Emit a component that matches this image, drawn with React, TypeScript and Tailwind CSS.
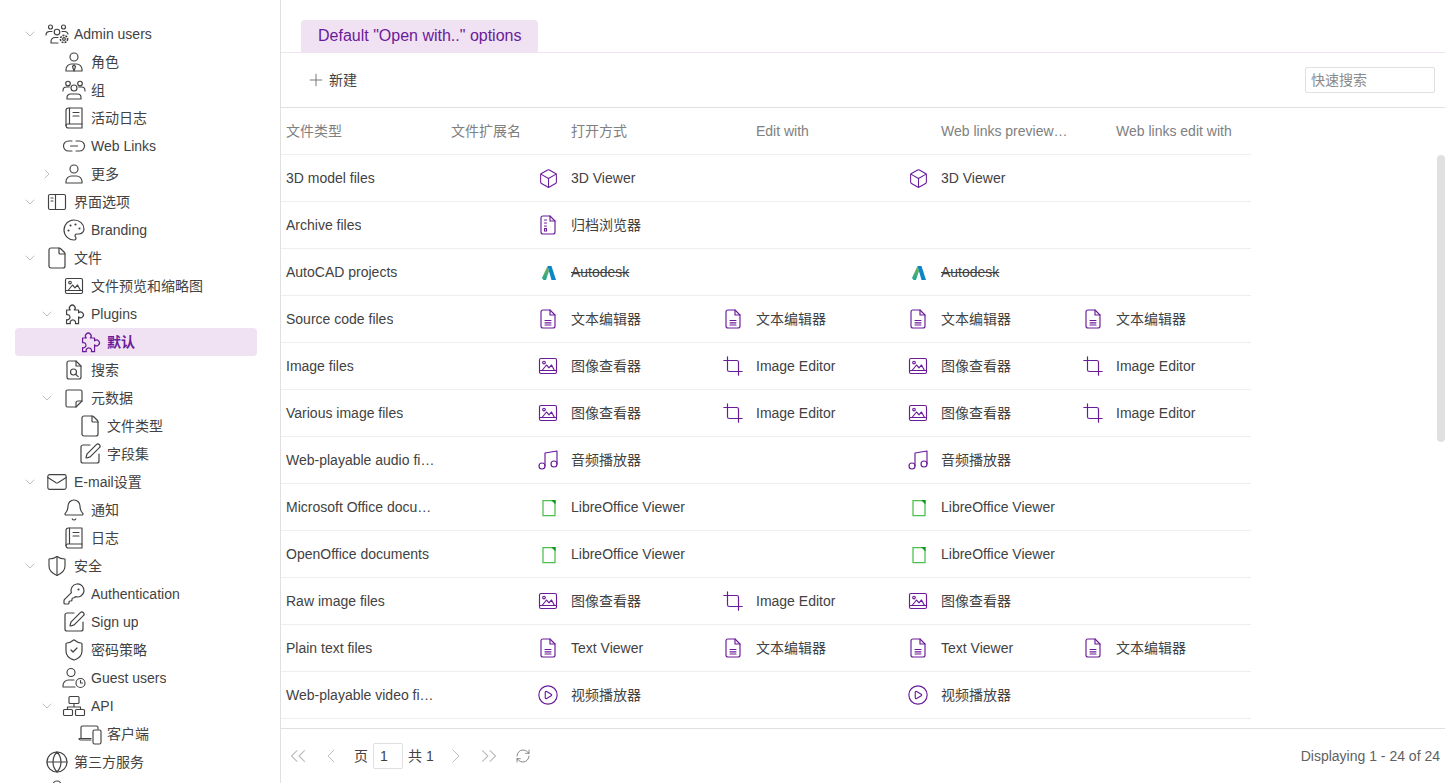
import type { ReactNode } from "react";
import {
  Bell,
  Box,
  ChevronDown,
  ChevronLeft,
  ChevronRight,
  ChevronsLeft,
  ChevronsRight,
  CirclePlay,
  Crop,
  File,
  Globe,
  KeyRound,
  Mail,
  Music,
  Palette,
  Plus,
  RefreshCw,
  ShieldCheck,
  SquarePen,
} from "lucide-react";

const FONT = "font-['Liberation_Sans','Noto_Sans_CJK_SC',sans-serif]";

function Svg({ children }: { children: ReactNode }) {
  return (
    <svg width="24" height="24" viewBox="0 0 24 24" fill="none" stroke="currentColor" strokeWidth="1.15" strokeLinecap="round" strokeLinejoin="round" className="shrink-0">
      {children}
    </svg>
  );
}

const lucideProps = { size: 24, strokeWidth: 1.2, className: "shrink-0" };

const UsersGear = () => (
  <Svg>
    <circle cx="5.500" cy="5" r="2" />
    <circle cx="18.500" cy="5" r="2" />
    <circle cx="12" cy="10" r="2.800" />
    <path d="M1 13v-.5A3.500 3.500 0 0 1 4.500 9.500H7" />
    <path d="M17 9.500h2.500A3.500 3.500 0 0 1 23 12" />
    <path d="M6 21v-1.500A4 4 0 0 1 10 15.500h3M6 21h7" />
    <circle cx="19" cy="17" r="1.400" />
    <circle cx="19" cy="17" r="3.600" strokeDasharray="2 1" strokeWidth="1.600" strokeLinecap="butt" />
  </Svg>
);
const UserTie = () => (
  <Svg>
    <circle cx="12" cy="7" r="4" />
    <path d="M4 21v-1.500A5.500 5.500 0 0 1 9.500 14h5a5.500 5.500 0 0 1 5.500 5.500V21z" />
    <path d="M12 15l-1.500 1.500L12 21l1.500-4.500z" />
  </Svg>
);
const Group = () => (
  <Svg>
    <circle cx="6" cy="5.500" r="2.300" />
    <circle cx="18" cy="5.500" r="2.300" />
    <circle cx="12" cy="10" r="3" />
    <path d="M1 13v-.5A3.500 3.500 0 0 1 4.500 9h2.800" />
    <path d="M16.700 9h2.800A3.500 3.500 0 0 1 23 12.500v.5" />
    <path d="M5 21v-1.500A3.500 3.500 0 0 1 8.500 16h7a3.500 3.500 0 0 1 3.500 3.500V21z" />
  </Svg>
);
const Book = () => (
  <Svg>
    <path d="M6.500 2H20v20H6.500A2.500 2.500 0 0 1 4 19.500v-15A2.500 2.500 0 0 1 6.500 2z" />
    <path d="M7.500 2v16M4 19.500A1.500 1.500 0 0 1 5.500 18H20" />
    <path d="M11 6.500h6M11 10h6" />
  </Svg>
);
const LinkPill = () => (
  <Svg>
    <path d="M10 7H6.500a5 5 0 0 0 0 10H10" />
    <path d="M14 7h3.500a5 5 0 0 1 0 10H14" />
    <path d="M8.500 12h7" />
  </Svg>
);
const User = () => (
  <Svg>
    <circle cx="12" cy="7" r="4" />
    <path d="M4 21v-1.500A5.500 5.500 0 0 1 9.500 14h5a5.500 5.500 0 0 1 5.500 5.500V21z" />
  </Svg>
);
const Panel = () => (
  <Svg>
    <rect x="3.500" y="4.500" width="17" height="15" rx="1.500" />
    <path d="M10.500 4.500v15M6 8h2M6 11h2" />
  </Svg>
);
const Picture = () => (
  <Svg>
    <rect x="3.500" y="4.500" width="17" height="15" rx="1.500" />
    <circle cx="8" cy="8.500" r="1.300" />
    <path d="M6 16.500l4.500-5.500 2.500 2.800 2.500-2.800 3 5.500M3.500 16.500h17" />
  </Svg>
);
const PuzzlePiece = () => (
  <svg width="24" height="24" viewBox="1 1 21 21" fill="none" stroke="currentColor" strokeWidth="1.05" strokeLinecap="round" strokeLinejoin="round" className="shrink-0">
    <path d="M5 8h3.200a2.500 2.500 0 1 1 3.600 0h3.700v2.500a2.500 2.500 0 1 1 0 3.600V20h-2.800a2.400 2.400 0 1 0-4.400 0H5v-3.500a2.300 2.300 0 1 0 0-4.400z" />
  </svg>
);
const FileSearchIn = () => (
  <Svg>
    <path d="M14 3H7a2 2 0 0 0-2 2v14a2 2 0 0 0 2 2h10a2 2 0 0 0 2-2V8z" />
    <path d="M14 3v5h5" />
    <circle cx="11.500" cy="14" r="3" />
    <path d="M13.800 16.300l2.400 2.400" />
  </Svg>
);
const NoteFold = () => (
  <Svg>
    <path d="M5.500 4h13A1.500 1.500 0 0 1 20 5.500V15l-6 6H5.500A1.500 1.500 0 0 1 4 19.500v-14A1.500 1.500 0 0 1 5.500 4z" />
    <path d="M14 21v-4a2 2 0 0 1 2-2h4" />
  </Svg>
);
const ShieldSplit = () => (
  <Svg>
    <path d="M12 2.500c2.500 1.800 5 2.500 8 2.500v7c0 4.500-3.500 7.500-8 9.500-4.500-2-8-5-8-9.500V5c3 0 5.500-.7 8-2.500z" />
    <path d="M12 2.500v19" />
  </Svg>
);
const UserClock = () => (
  <Svg>
    <circle cx="9" cy="6.500" r="4" />
    <path d="M1 21v-1.500A5.500 5.500 0 0 1 6.500 14H12M1 21h12" />
    <circle cx="18.500" cy="17" r="4.500" />
    <path d="M18.500 14.500V17h2" />
  </Svg>
);
const Sitemap = () => (
  <Svg>
    <rect x="7" y="2.500" width="10" height="7" rx="1" />
    <path d="M12 9.500v3.500M5.500 15.500V13h13v2.500" />
    <rect x="1.500" y="15.500" width="9" height="6" rx="1" />
    <rect x="13.500" y="15.500" width="9" height="6" rx="1" />
  </Svg>
);
const Devices = () => (
  <Svg>
    <path d="M3 16V5.500A1.500 1.500 0 0 1 4.500 4h14A1.500 1.500 0 0 1 20 5.500V7" />
    <path d="M1 16.500h12M1 16.500c0 1 .7 1.500 1.500 1.500H13" />
    <rect x="15" y="8" width="8" height="14" rx="1.500" />
  </Svg>
);
const FileLines = () => (
  <Svg>
    <path d="M14 3H7a2 2 0 0 0-2 2v14a2 2 0 0 0 2 2h10a2 2 0 0 0 2-2V8z" />
    <path d="M14 3v5h5M9 13.500h6M9 15.800h6M9 18h6" />
  </Svg>
);
const FileZip = () => (
  <Svg>
    <path d="M14 3H7a2 2 0 0 0-2 2v14a2 2 0 0 0 2 2h10a2 2 0 0 0 2-2V8z" />
    <path d="M14 3v5h5M8.500 7h2M8.500 10h2M8.500 13h2" />
    <rect x="8.500" y="15.500" width="2" height="2.500" />
  </Svg>
);
const Autodesk = () => (
  <svg width="24" height="24" viewBox="0 0 24 24" className="shrink-0">
    <defs>
      <linearGradient id="adsk" x1="0" y1="0" x2="0" y2="1">
        <stop offset="0" stopColor="#7fb53a" />
        <stop offset="1" stopColor="#1fa5a0" />
      </linearGradient>
    </defs>
    <path d="M11.500 6L6 18l1.500 2H10l3-9z" fill="url(#adsk)" />
    <path d="M11.500 6h4L20 20h-4.500z" fill="#0b86c9" />
  </svg>
);
const LibreDoc = () => (
  <svg width="24" height="24" viewBox="0 0 24 24" className="shrink-0">
    <path d="M7 5.500h12v15H7z" fill="#fff" stroke="#4cc04c" strokeWidth="1.250" />
    <path d="M15 5h4.500v4.500z" fill="#0c9a1c" />
  </svg>
);

// --- sidebar tree
const LEVEL = ["pl-[8px]", "pl-[25px]", "pl-[41px]"];

type TreeItem = {
  level: number;
  label: string;
  icon: ReactNode;
  arrow?: "down" | "right";
  active?: boolean;
};

const tree: TreeItem[] = [
  { level: 0, label: "Admin users", icon: <UsersGear />, arrow: "down" },
  { level: 1, label: "角色", icon: <UserTie /> },
  { level: 1, label: "组", icon: <Group /> },
  { level: 1, label: "活动日志", icon: <Book /> },
  { level: 1, label: "Web Links", icon: <LinkPill /> },
  { level: 1, label: "更多", icon: <User />, arrow: "right" },
  { level: 0, label: "界面选项", icon: <Panel />, arrow: "down" },
  { level: 1, label: "Branding", icon: <Palette {...lucideProps} /> },
  { level: 0, label: "文件", icon: <File {...lucideProps} />, arrow: "down" },
  { level: 1, label: "文件预览和缩略图", icon: <Picture /> },
  { level: 1, label: "Plugins", icon: <PuzzlePiece />, arrow: "down" },
  { level: 2, label: "默认", icon: <PuzzlePiece />, active: true },
  { level: 1, label: "搜索", icon: <FileSearchIn /> },
  { level: 1, label: "元数据", icon: <NoteFold />, arrow: "down" },
  { level: 2, label: "文件类型", icon: <File {...lucideProps} /> },
  { level: 2, label: "字段集", icon: <SquarePen {...lucideProps} /> },
  { level: 0, label: "E-mail设置", icon: <Mail size={22} strokeWidth={1.2} className="shrink-0" />, arrow: "down" },
  { level: 1, label: "通知", icon: <Bell {...lucideProps} /> },
  { level: 1, label: "日志", icon: <Book /> },
  { level: 0, label: "安全", icon: <ShieldSplit />, arrow: "down" },
  { level: 1, label: "Authentication", icon: <KeyRound {...lucideProps} /> },
  { level: 1, label: "Sign up", icon: <SquarePen {...lucideProps} /> },
  { level: 1, label: "密码策略", icon: <ShieldCheck {...lucideProps} /> },
  { level: 1, label: "Guest users", icon: <UserClock /> },
  { level: 1, label: "API", icon: <Sitemap />, arrow: "down" },
  { level: 2, label: "客户端", icon: <Devices /> },
  { level: 0, label: "第三方服务", icon: <Globe {...lucideProps} /> },
  { level: 0, label: "", icon: <User /> },
];

function TreeRow({ item }: { item: TreeItem }) {
  return (
    <div
      className={`flex h-7 shrink-0 items-center rounded ${LEVEL[item.level]} ${
        item.active ? "bg-[#f0e1f3] font-bold text-[#6a1b9a]" : "text-[#424242]"
      }`}
    >
      <span className="flex w-[14px] shrink-0 justify-center text-[#9e9e9e]">
        {item.arrow === "down" && <ChevronDown size={16} strokeWidth={1} className="shrink-0" />}
        {item.arrow === "right" && <ChevronRight size={16} strokeWidth={1} className="shrink-0" />}
      </span>
      <span className="ml-[8px] flex w-[24px] shrink-0 justify-center">{item.icon}</span>
      <span className="ml-[5px] truncate text-sm leading-5">{item.label}</span>
    </div>
  );
}

// --- table
type Action = { icon: ReactNode; label: string; strike?: boolean };

const viewer3d: Action = { icon: <Box size={21} strokeWidth={1.2} className="shrink-0" />, label: "3D Viewer" };
const archive: Action = { icon: <FileZip />, label: "归档浏览器" };
const autodesk: Action = { icon: <Autodesk />, label: "Autodesk", strike: true };
const textEdit: Action = { icon: <FileLines />, label: "文本编辑器" };
const textView: Action = { icon: <FileLines />, label: "Text Viewer" };
const imageView: Action = { icon: <Picture />, label: "图像查看器" };
const imageEdit: Action = { icon: <Crop size={22} strokeWidth={1.3} className="shrink-0" />, label: "Image Editor" };
const audio: Action = { icon: <Music size={24} strokeWidth={1.15} className="shrink-0" />, label: "音频播放器" };
const libre: Action = { icon: <LibreDoc />, label: "LibreOffice Viewer" };
const video: Action = { icon: <CirclePlay size={22} strokeWidth={1.25} className="shrink-0" />, label: "视频播放器" };

const rows: { name: string; cells: (Action | null)[] }[] = [
  { name: "3D model files", cells: [viewer3d, null, viewer3d, null] },
  { name: "Archive files", cells: [archive, null, null, null] },
  { name: "AutoCAD projects", cells: [autodesk, null, autodesk, null] },
  { name: "Source code files", cells: [textEdit, textEdit, textEdit, textEdit] },
  { name: "Image files", cells: [imageView, imageEdit, imageView, imageEdit] },
  { name: "Various image files", cells: [imageView, imageEdit, imageView, imageEdit] },
  { name: "Web-playable audio files", cells: [audio, null, audio, null] },
  { name: "Microsoft Office documents", cells: [libre, null, libre, null] },
  { name: "OpenOffice documents", cells: [libre, null, libre, null] },
  { name: "Raw image files", cells: [imageView, imageEdit, imageView, null] },
  { name: "Plain text files", cells: [textView, textEdit, textView, textEdit] },
  { name: "Web-playable video files", cells: [video, null, video, null] },
  { name: "", cells: [null, null, null, null] },
];

const COLS = "grid w-[970px] grid-cols-[165px_85px_185px_185px_175px_175px]";

function ActionCell({ action }: { action: Action | null }) {
  if (!action) return <div />;
  return (
    <div className="flex min-w-0 items-center pl-[5px]">
      <span className="flex w-[24px] shrink-0 justify-center text-[#6a1b9a]">{action.icon}</span>
      <span className={`ml-[11px] truncate pr-2 ${action.strike ? "line-through" : ""}`}>{action.label}</span>
    </div>
  );
}

export default function App() {
  return (
    <div className={`flex h-screen w-full overflow-hidden bg-white ${FONT}`}>
      <aside className="flex w-[281px] shrink-0 flex-col overflow-hidden border-r border-[#e0e0e0] pt-[20px] pl-[15px]">
        <div className="flex w-[242px] flex-col">
          {tree.map((item) => (
            <TreeRow key={item.label} item={item} />
          ))}
        </div>
      </aside>

      <main className="relative flex min-w-0 flex-1 flex-col">
        <div className="flex h-[53px] shrink-0 items-end border-b border-[#f0e1f3] pl-[20px]">
          <div className="flex h-[32px] items-center rounded-t bg-[#f0e1f3] px-[17px] text-base text-[#6a1b9a]">
            Default "Open with.." options
          </div>
        </div>

        <div className="flex h-[55px] shrink-0 items-center justify-between border-b border-[#e0e0e0] pr-[10px] pl-[25px] text-sm text-[#424242]">
          <button className="flex items-center gap-[3px]">
            <Plus size={20} strokeWidth={1} className="text-[#616161]" />
            新建
          </button>
          <input
            placeholder="快速搜索"
            className="h-[26px] w-[130px] rounded-[2px] border border-[#e0e0e0] px-[5px] text-sm placeholder:text-[#8a8a8a]"
          />
        </div>

        <div className={`${COLS} h-[47px] shrink-0 items-center border-b border-[#eeeeee] text-sm text-[#808080]`}>
          <div className="pl-[5px]">文件类型</div>
          <div className="pl-[5px]">文件扩展名</div>
          <div className="pl-[40px]">打开方式</div>
          <div className="pl-[40px]">Edit with</div>
          <div className="truncate pr-[5px] pl-[40px]">Web links preview with</div>
          <div className="truncate pl-[40px]">Web links edit with</div>
        </div>

        <div className="min-h-0 flex-1 overflow-hidden">
          {rows.map((row, i) => (
            <div key={i} className={`${COLS} h-[47px] border-b border-[#eeeeee] text-sm text-[#424242]`}>
              <div className="flex min-w-0 items-center pr-[10px] pl-[5px]">
                <span className="truncate">{row.name}</span>
              </div>
              <div />
              {row.cells.map((cell, j) => (
                <ActionCell key={j} action={cell} />
              ))}
            </div>
          ))}
        </div>
        <div className="absolute top-[155px] right-0 h-[287px] w-[8px] rounded-full bg-[#e0e0e0]" />

        <div className="flex h-[55px] shrink-0 items-center justify-between border-t border-[#e0e0e0] pr-[5px] text-sm text-[#424242]">
          <div className="flex items-center">
            <ChevronsLeft size={26} strokeWidth={1} className="ml-[4px] text-[#bdbdbd]" />
            <ChevronLeft size={24} strokeWidth={1} className="ml-[8px] text-[#bdbdbd]" />
            <span className="ml-[11px]">页</span>
            <input
              defaultValue="1"
              className="ml-[5px] h-[26px] w-[30px] rounded-[2px] border border-[#e0e0e0] px-[6px] text-sm"
            />
            <span className="ml-[5px]">共 1</span>
            <ChevronRight size={24} strokeWidth={1} className="ml-[10px] text-[#bdbdbd]" />
            <ChevronsRight size={26} strokeWidth={1} className="ml-[8px] text-[#bdbdbd]" />
            <RefreshCw size={16} strokeWidth={1.1} className="ml-[13px] text-[#616161]" />
          </div>
          <span className="text-[#616161]">Displaying 1 - 24 of 24</span>
        </div>
      </main>
    </div>
  );
}
